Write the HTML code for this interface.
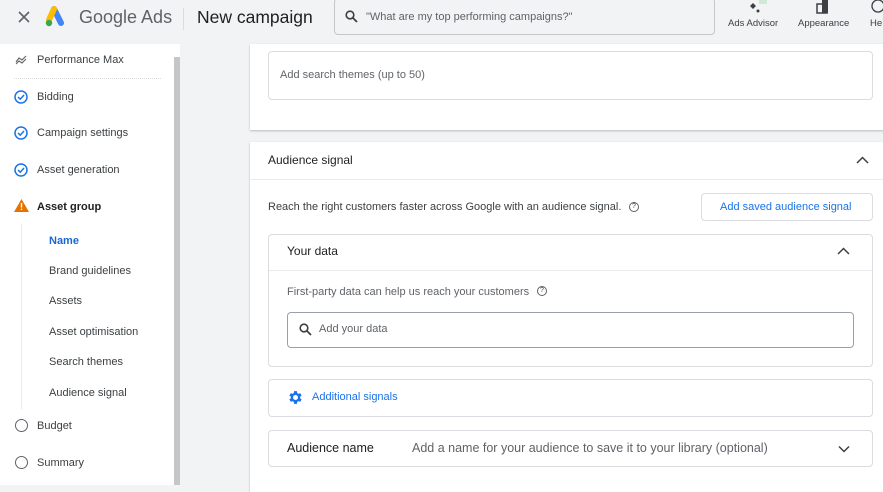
<!DOCTYPE html>
<html><head><style>
*{box-sizing:border-box;margin:0;padding:0}
body{width:883px;height:485px;overflow:hidden;background:#f1f3f4;font-family:"Liberation Sans",Arial,sans-serif;position:relative;color:#3c4043}
.a{position:absolute}
.t{font-size:11px;color:#3c4043;white-space:nowrap}
.box{position:absolute;background:#fff;border:1px solid #dadce0;border-radius:4px}
</style></head><body>
<!-- header -->
<div class="a" style="left:0;top:0;width:883px;height:44px;background:#f1f3f4"></div>
<svg class="a" style="left:18px;top:11px" width="12" height="12" viewBox="0 0 12 12"><path d="M1 1L11 11M11 1L1 11" stroke="#5f6368" stroke-width="1.6"/></svg>
<svg class="a" style="left:45px;top:6px" width="24" height="22" viewBox="0 0 24 22"><path d="M9 3L16 17" stroke="#4285f4" stroke-width="6" stroke-linecap="round"/><path d="M9 3L4 14" stroke="#fbbc04" stroke-width="6" stroke-linecap="round"/><circle cx="4" cy="17" r="3.2" fill="#34a853"/></svg>
<div class="a" style="left:79px;top:7px;font-size:18px;color:#5f6368">Google Ads</div>
<div class="a" style="left:183px;top:8px;width:1px;height:22px;background:#dadce0"></div>
<div class="a" style="left:197px;top:7px;font-size:17.5px;color:#202124">New campaign</div>
<div class="a" style="left:334px;top:-2px;width:381px;height:37px;border:1px solid #c4c7c5;border-radius:4px;background:#f1f3f4"></div>
<svg class="a" style="left:345px;top:10px" width="13" height="13" viewBox="0 0 13 13"><circle cx="5" cy="5" r="3.8" stroke="#3c4043" stroke-width="1.6" fill="none"/><path d="M8 8L12 12" stroke="#3c4043" stroke-width="1.8"/></svg>
<div class="a t" style="left:366px;top:11px;font-size:11px;color:#5f6368">"What are my top performing campaigns?"</div>
<svg class="a" style="left:745px;top:0px" width="22" height="16" viewBox="0 0 22 16"><path d="M8 3L11 6L8 9L5 6Z" fill="#3c4043"/><circle cx="13" cy="11" r="1.5" fill="#3c4043"/><rect x="14" y="0" width="10" height="4" fill="#ceead6"/></svg>
<div class="a t" style="left:728px;top:18px;font-size:9.5px;color:#3c4043">Ads Advisor</div>
<svg class="a" style="left:816px;top:0" width="16" height="14" viewBox="0 0 16 14"><rect x="1" y="4" width="10" height="9" fill="none" stroke="#3c4043" stroke-width="1.5"/><rect x="6" y="0" width="6" height="13" fill="#3c4043"/></svg>
<div class="a t" style="left:798px;top:18px;font-size:9.5px">Appearance</div>
<svg class="a" style="left:871px;top:0" width="14" height="14" viewBox="0 0 14 14"><circle cx="7" cy="6" r="6" fill="none" stroke="#3c4043" stroke-width="1.3"/></svg>
<div class="a t" style="left:870px;top:18px;font-size:9.5px">He</div>

<!-- sidebar -->
<div class="a" style="left:0;top:44px;width:180px;height:441px;background:#fff"></div>
<div class="a" style="left:174px;top:57px;width:6px;height:428px;background:#c6c6c6"></div>
<svg class="a" style="left:15px;top:55px" width="12" height="10" viewBox="0 0 12 10"><path d="M1 7L4 3L7 5L11 1M1 9L4 6L7 8L11 4" stroke="#5f6368" stroke-width="1.1" fill="none"/></svg>
<div class="a t" style="left:37px;top:54px">Performance Max</div>
<div class="a" style="left:14px;top:78px;width:147px;border-top:1px dotted #dadce0"></div>
<svg class="a" style="left:14px;top:90px" width="14" height="14" viewBox="0 0 14 14"><circle cx="7" cy="7" r="6" fill="none" stroke="#1a73e8" stroke-width="1.5"/><path d="M4 7L6.2 9.2L10 5" stroke="#1a73e8" stroke-width="1.5" fill="none"/></svg>
<div class="a t" style="left:37px;top:91px">Bidding</div>
<svg class="a" style="left:14px;top:126px" width="14" height="14" viewBox="0 0 14 14"><circle cx="7" cy="7" r="6" fill="none" stroke="#1a73e8" stroke-width="1.5"/><path d="M4 7L6.2 9.2L10 5" stroke="#1a73e8" stroke-width="1.5" fill="none"/></svg>
<div class="a t" style="left:37px;top:127px">Campaign settings</div>
<svg class="a" style="left:14px;top:163px" width="14" height="14" viewBox="0 0 14 14"><circle cx="7" cy="7" r="6" fill="none" stroke="#1a73e8" stroke-width="1.5"/><path d="M4 7L6.2 9.2L10 5" stroke="#1a73e8" stroke-width="1.5" fill="none"/></svg>
<div class="a t" style="left:37px;top:164px">Asset generation</div>
<svg class="a" style="left:14px;top:199px" width="15" height="13" viewBox="0 0 15 13"><path d="M7.5 0L15 13H0Z" fill="#e37400"/><rect x="6.8" y="4" width="1.4" height="4.5" fill="#fff"/><rect x="6.8" y="9.6" width="1.4" height="1.4" fill="#fff"/></svg>
<div class="a t" style="left:37px;top:201px;font-weight:bold;color:#202124">Asset group</div>
<div class="a" style="left:21px;top:224px;width:1px;height:185px;background:#e8eaed"></div>
<div class="a t" style="left:49px;top:235px;font-weight:bold;color:#1967d2">Name</div>
<div class="a t" style="left:49px;top:265px">Brand guidelines</div>
<div class="a t" style="left:49px;top:295px">Assets</div>
<div class="a t" style="left:49px;top:326px">Asset optimisation</div>
<div class="a t" style="left:49px;top:356px">Search themes</div>
<div class="a t" style="left:49px;top:387px">Audience signal</div>
<div class="a" style="left:15px;top:419px;width:13px;height:13px;border:1.5px solid #5f6368;border-radius:50%"></div>
<div class="a t" style="left:37px;top:420px">Budget</div>
<div class="a" style="left:15px;top:456px;width:13px;height:13px;border:1.5px solid #5f6368;border-radius:50%"></div>
<div class="a t" style="left:37px;top:457px">Summary</div>

<!-- top card -->
<div class="a" style="left:250px;top:44px;width:640px;height:86px;background:#fff;box-shadow:0 1px 2px rgba(60,64,67,.3)"></div>
<div class="box" style="left:268px;top:51px;width:605px;height:49px"></div>
<div class="a t" style="left:280px;top:69px;color:#5f6368">Add search themes (up to 50)</div>

<!-- audience card -->
<div class="a" style="left:250px;top:142px;width:640px;height:350px;background:#fff;box-shadow:0 1px 2px rgba(60,64,67,.3)"></div>
<div class="a t" style="left:268px;top:153px;font-size:12px;color:#202124">Audience signal</div>
<svg class="a" style="left:856px;top:156px" width="13" height="8" viewBox="0 0 13 8"><path d="M1 7L6.5 1.5L12 7" stroke="#3c4043" stroke-width="1.5" fill="none"/></svg>
<div class="a" style="left:250px;top:179px;width:640px;height:1px;background:#e8eaed"></div>
<div class="a t" style="left:268px;top:201px;font-size:11px">Reach the right customers faster across Google with an audience signal.</div>
<div class="a" style="left:629px;top:202px;width:10px;height:10px;border:1.2px solid #5f6368;border-radius:50%;font-size:7px;text-align:center;line-height:8px">?</div>
<div class="box" style="left:701px;top:193px;width:172px;height:28px"></div>
<div class="a t" style="left:720px;top:201px;font-size:11px;color:#1a73e8">Add saved audience signal</div>

<div class="box" style="left:268px;top:234px;width:605px;height:133px"></div>
<div class="a t" style="left:287px;top:244px;font-size:12px;color:#202124">Your data</div>
<svg class="a" style="left:837px;top:247px" width="13" height="8" viewBox="0 0 13 8"><path d="M1 7L6.5 1.5L12 7" stroke="#3c4043" stroke-width="1.5" fill="none"/></svg>
<div class="a" style="left:269px;top:270px;width:603px;height:1px;background:#e8eaed"></div>
<div class="a t" style="left:287px;top:286px;font-size:11px;color:#5f6368">First-party data can help us reach your customers</div>
<div class="a" style="left:537px;top:286px;width:10px;height:10px;border:1.2px solid #5f6368;border-radius:50%;font-size:7px;text-align:center;line-height:8px">?</div>
<div class="a" style="left:287px;top:312px;width:567px;height:36px;border:1px solid #9aa0a6;border-radius:4px"></div>
<svg class="a" style="left:299px;top:323px" width="13" height="13" viewBox="0 0 13 13"><circle cx="5" cy="5" r="3.8" stroke="#3c4043" stroke-width="1.6" fill="none"/><path d="M8 8L12 12" stroke="#3c4043" stroke-width="1.8"/></svg>
<div class="a t" style="left:319px;top:323px;font-size:11px;color:#5f6368">Add your data</div>

<div class="box" style="left:268px;top:379px;width:605px;height:38px"></div>
<svg class="a" style="left:287px;top:389px" width="17" height="17" viewBox="0 0 24 24"><path fill="#1a73e8" d="M19.4 13a7.5 7.5 0 0 0 0-2l2.1-1.6-2-3.5-2.5 1a7 7 0 0 0-1.7-1L14.9 3h-4l-.4 2.9a7 7 0 0 0-1.7 1l-2.5-1-2 3.5L6.4 11a7.5 7.5 0 0 0 0 2l-2.1 1.6 2 3.5 2.5-1a7 7 0 0 0 1.7 1l.4 2.9h4l.4-2.9a7 7 0 0 0 1.7-1l2.5 1 2-3.5zM12.9 15.5a3.5 3.5 0 1 1 0-7 3.5 3.5 0 0 1 0 7z" transform="translate(-0.9 0)"/></svg>
<div class="a t" style="left:312px;top:391px;font-size:11px;color:#1a73e8">Additional signals</div>

<div class="box" style="left:268px;top:430px;width:605px;height:37px"></div>
<div class="a t" style="left:287px;top:441px;font-size:12.5px;color:#202124">Audience name</div>
<div class="a t" style="left:412px;top:441px;font-size:12.5px;color:#5f6368">Add a name for your audience to save it to your library (optional)</div>
<svg class="a" style="left:838px;top:445px" width="12" height="8" viewBox="0 0 12 8"><path d="M1 1.5L6 6.5L11 1.5" stroke="#3c4043" stroke-width="1.5" fill="none"/></svg>
</body></html>
